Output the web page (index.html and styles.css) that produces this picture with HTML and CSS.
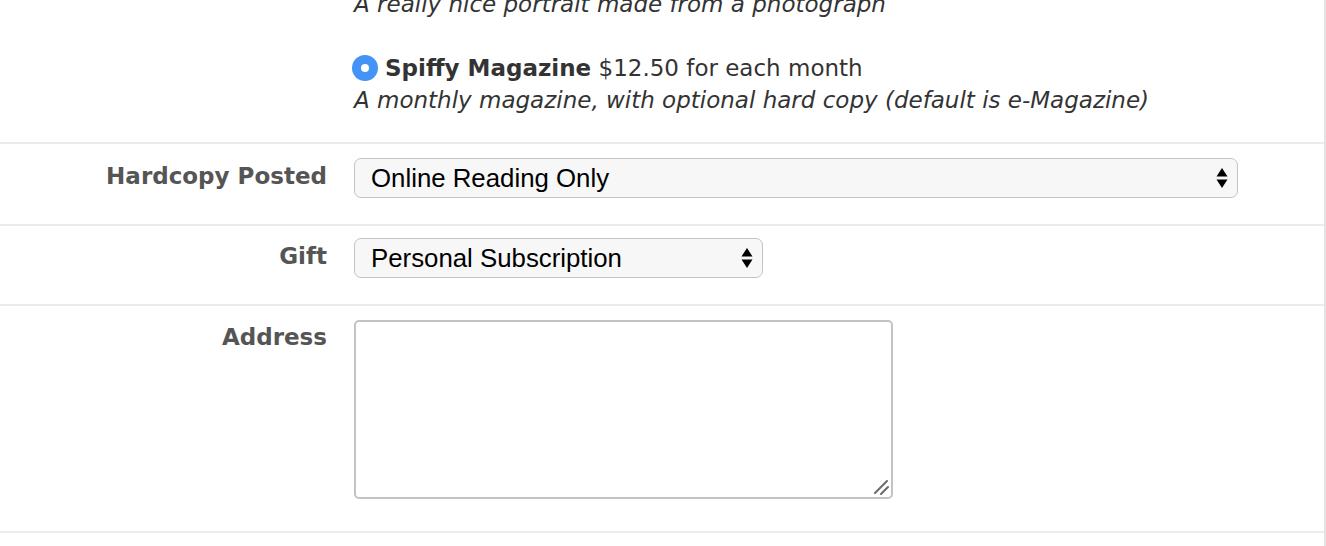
FILE: index.html
```html
<!DOCTYPE html>
<html>
<head>
<meta charset="utf-8">
<link rel="stylesheet" href="styles.css">
</head>
<body>
<div class="form">
  <div class="row row-options">
    <div class="label"></div>
    <div class="control options">
      <div class="option">
        <div class="opt-line"><span class="opt-title">Portrait</span> $45.00</div>
        <div class="opt-desc">A really nice portrait made from a photograph</div>
      </div>
      <div class="option">
        <div class="opt-line"><input type="radio" class="radio" name="product" checked><span class="opt-title">Spiffy Magazine</span> $12.50 for each month</div>
        <div class="opt-desc">A monthly magazine, with optional hard copy (default is e-Magazine)</div>
      </div>
    </div>
  </div>
  <div class="row row-hard">
    <div class="label">Hardcopy Posted</div>
    <div class="control">
      <div class="select-wrap wide">
        <select class="select"><option>Online Reading Only</option></select>
        <svg class="arrows" width="12" height="22" viewBox="0 0 12 22"><path d="M6 1 L11.5 9.5 L0.5 9.5 Z M6 21 L11.5 12.5 L0.5 12.5 Z" fill="#000"/></svg>
      </div>
    </div>
  </div>
  <div class="row row-gift">
    <div class="label">Gift</div>
    <div class="control">
      <div class="select-wrap narrow">
        <select class="select"><option>Personal Subscription</option></select>
        <svg class="arrows" width="12" height="22" viewBox="0 0 12 22"><path d="M6 1 L11.5 9.5 L0.5 9.5 Z M6 21 L11.5 12.5 L0.5 12.5 Z" fill="#000"/></svg>
      </div>
    </div>
  </div>
  <div class="row row-address">
    <div class="label">Address</div>
    <div class="control">
      <div class="textarea-wrap">
        <textarea class="textarea"></textarea>
        <svg class="grip" width="16" height="16" viewBox="0 0 16 16"><path d="M2 14 L14 2 M8 15 L15 8" stroke="#6b6b6b" stroke-width="2" stroke-linecap="round" fill="none"/></svg>
      </div>
    </div>
  </div>
</div>
</body>
</html>
```
FILE: styles.css
```css
html, body {
  margin: 0;
  padding: 0;
  background: #fff;
}
body {
  font-family: "DejaVu Sans", Verdana, sans-serif;
  font-size: 23px;
  line-height: 32px;
  color: #333;
  overflow: hidden;
}
.form {
  display: flow-root;
  width: 1324px;
  height: 546px;
  overflow: hidden;
  border-right: 2px solid #e3e3e3;
}
.row {
  display: grid;
  grid-template-columns: 327px 1fr;
  column-gap: 27px;
  border-bottom: 2px solid #ebebeb;
}
.label {
  text-align: right;
  font-weight: bold;
  color: #555;
}
.row-options {
  margin-top: -44px;
  padding-bottom: 26px;
}
.option + .option {
  margin-top: 32px;
}
.opt-line {
  display: flex;
  align-items: center;
  white-space: pre;
}
.opt-title {
  font-weight: bold;
}
.opt-desc {
  font-style: italic;
}
.radio {
  appearance: none;
  -webkit-appearance: none;
  margin: 0 7px 0 -2px;
  width: 26px;
  height: 26px;
  border-radius: 50%;
  background: #4493f7;
  position: relative;
  flex: none;
}
.radio::after {
  content: "";
  position: absolute;
  left: 9px;
  top: 9px;
  width: 8px;
  height: 8px;
  border-radius: 50%;
  background: #fff;
}
.row-hard {
  padding: 14px 0 26px;
}
.row-gift {
  padding: 12px 0 26px;
}
.row-hard .label,
.row-gift .label {
  padding-top: 2px;
}
.row-address .label {
  padding-top: 1px;
}
.row-address {
  padding: 14px 0 32px;
}
.select-wrap {
  position: relative;
  height: 40px;
}
.select-wrap.wide { width: 884px; }
.select-wrap.narrow { width: 409px; }
.select {
  appearance: none;
  -webkit-appearance: none;
  width: 100%;
  height: 40px;
  margin: 0;
  padding: 0 40px 0 16px;
  border: 1.5px solid #c3c3c3;
  border-radius: 7px;
  background: #f7f7f7;
  font-family: "Liberation Sans", Arial, sans-serif;
  font-size: 25.8px;
  color: #000;
  box-sizing: border-box;
  outline: none;
}
.arrows {
  position: absolute;
  right: 10px;
  top: 9px;
  pointer-events: none;
}
.textarea-wrap {
  position: relative;
  width: 539px;
  height: 179px;
}
.textarea {
  display: block;
  width: 539px;
  height: 179px;
  margin: 0;
  box-sizing: border-box;
  border: 2px solid #c3c3c3;
  border-radius: 5px;
  background: #fff;
  resize: none;
  font-family: "Liberation Sans", Arial, sans-serif;
}
.grip {
  position: absolute;
  right: 4px;
  bottom: 4px;
  pointer-events: none;
}
```
